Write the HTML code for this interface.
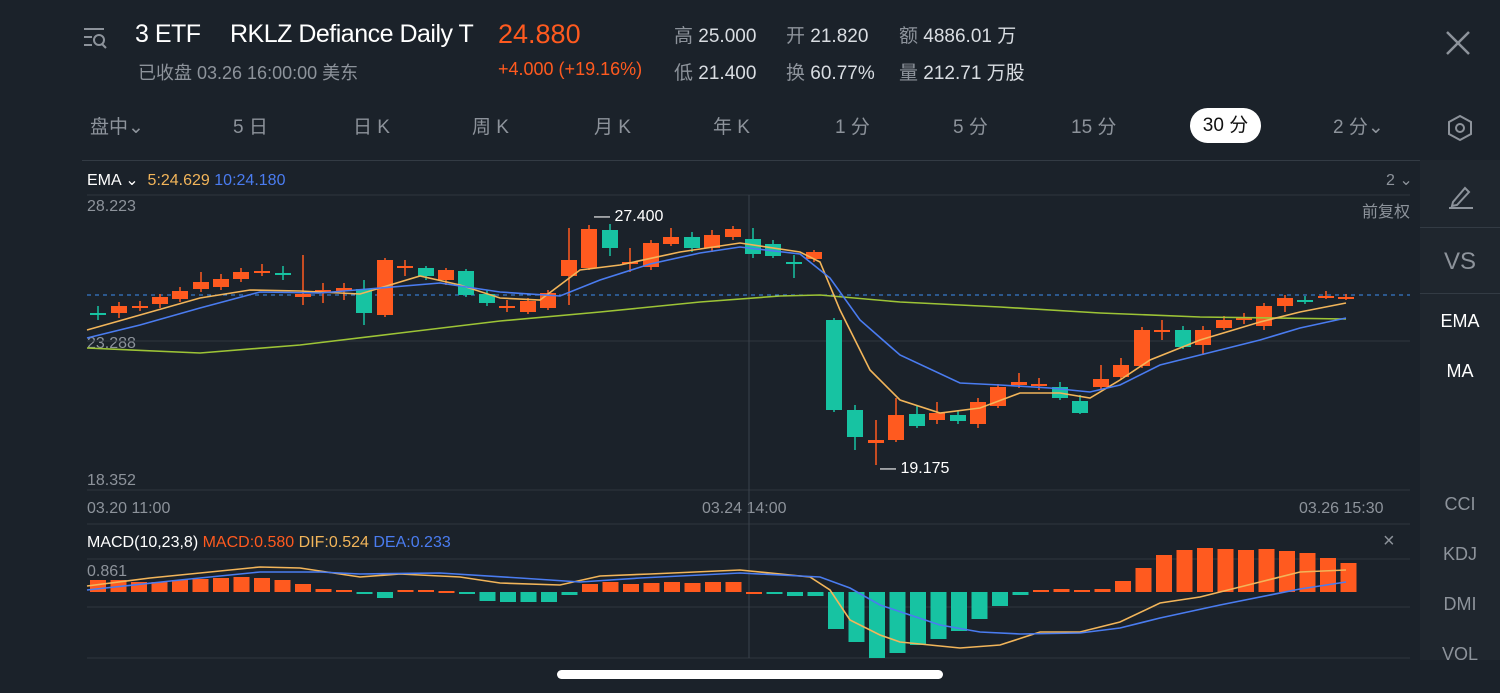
<!DOCTYPE html>
<html><head><meta charset="utf-8">
<style>
body{margin:0;width:1500px;height:693px;background:#1b222a;font-family:"Liberation Sans","Noto Sans CJK SC",sans-serif;overflow:hidden;position:relative;color:#d9dde2}
.a{position:absolute;white-space:nowrap}
.g{color:#8d939b}
.tab{position:absolute;top:112px;font-size:19px;color:#8d939b}
.side{position:absolute;left:1420px;width:80px;text-align:center;font-size:18px;color:#8d939b}
</style></head><body>
<svg class="a" style="left:82px;top:25px" width="28" height="26"><g stroke="#8d939b" stroke-width="2" fill="none"><line x1="2" y1="4" x2="22" y2="4"/><line x1="2" y1="12" x2="10" y2="12"/><line x1="2" y1="20" x2="10" y2="20"/><circle cx="17" cy="15" r="5"/><line x1="20" y1="19" x2="24" y2="23"/></g></svg>
<div class="a" style="left:135px;top:20px;font-size:25px;color:#fff;letter-spacing:-0.5px">3 ETF</div>
<div class="a" style="left:230px;top:20px;font-size:25px;color:#fff;letter-spacing:-0.5px">RKLZ Defiance Daily T</div>
<div class="a" style="left:498px;top:19px;font-size:27px;color:#ff5a1f">24.880</div>
<div class="a g" style="left:138px;top:59px;font-size:18px">已收盘 03.26 16:00:00 美东</div>
<div class="a" style="left:498px;top:59px;font-size:18px;color:#ff5a1f">+4.000 (+19.16%)</div>
<div class="a" style="left:674px;top:21px;font-size:19px"><span class="g">高</span> 25.000</div>
<div class="a" style="left:674px;top:58px;font-size:19px"><span class="g">低</span> 21.400</div>
<div class="a" style="left:786px;top:21px;font-size:19px"><span class="g">开</span> 21.820</div>
<div class="a" style="left:786px;top:58px;font-size:19px"><span class="g">换</span> 60.77%</div>
<div class="a" style="left:899px;top:21px;font-size:19px"><span class="g">额</span> 4886.01 万</div>
<div class="a" style="left:899px;top:58px;font-size:19px"><span class="g">量</span> 212.71 万股</div>
<svg class="a" style="left:1445px;top:30px" width="26" height="26"><g stroke="#8d939b" stroke-width="2.5"><line x1="2" y1="2" x2="24" y2="24"/><line x1="24" y1="2" x2="2" y2="24"/></g></svg>
<div class="tab" style="left:90px">盘中⌄</div>
<div class="tab" style="left:233px">5 日</div>
<div class="tab" style="left:353px">日 K</div>
<div class="tab" style="left:472px">周 K</div>
<div class="tab" style="left:594px">月 K</div>
<div class="tab" style="left:713px">年 K</div>
<div class="tab" style="left:835px">1 分</div>
<div class="tab" style="left:953px">5 分</div>
<div class="tab" style="left:1071px">15 分</div>
<div class="a" style="left:1190px;top:108px;width:71px;height:35px;border-radius:18px;background:#fff;color:#111;font-size:19px;text-align:center;line-height:35px">30 分</div>
<div class="tab" style="left:1333px">2 分⌄</div>
<svg class="a" style="left:1447px;top:114px" width="26" height="28"><polygon points="13,2 24,8 24,20 13,26 2,20 2,8" fill="none" stroke="#8d939b" stroke-width="2"/><circle cx="13" cy="14" r="4" fill="none" stroke="#8d939b" stroke-width="2"/></svg>
<div class="a" style="left:82px;top:160px;width:1338px;height:1px;background:#333b44"></div>
<div class="a" style="left:1420px;top:160px;width:80px;height:500px;background:#1f262e"></div>
<div class="a" style="left:1420px;top:227px;width:80px;height:1px;background:#333b44"></div>
<div class="a" style="left:1420px;top:293px;width:80px;height:1px;background:#333b44"></div>
<svg class="a" style="left:1447px;top:182px" width="28" height="28"><g stroke="#8d939b" stroke-width="2" fill="none"><path d="M6 20 L18 6 L22 10 L10 23 L5 24 Z"/><line x1="2" y1="26" x2="26" y2="26"/></g></svg>
<div class="side" style="top:248px;font-size:24px">VS</div>
<div class="side" style="top:311px;color:#fff">EMA</div>
<div class="side" style="top:361px;color:#fff">MA</div>
<div class="side" style="top:494px">CCI</div>
<div class="side" style="top:544px">KDJ</div>
<div class="side" style="top:594px">DMI</div>
<div class="side" style="top:644px">VOL</div>
<div class="a" style="left:87px;top:170px;font-size:16px;color:#fff">EMA ⌄ <span style="color:#f2b55a">&nbsp;5:24.629</span> <span style="color:#4a7cf0">10:24.180</span></div>
<div class="a g" style="left:1386px;top:170px;font-size:16px">2 ⌄</div>
<div class="a g" style="left:1362px;top:198px;font-size:16px">前复权</div>
<div class="a g" style="left:87px;top:198px;font-size:16px">28.223</div>
<div class="a g" style="left:87px;top:335px;font-size:16px">23.288</div>
<div class="a g" style="left:87px;top:472px;font-size:16px">18.352</div>
<div class="a g" style="left:87px;top:500px;font-size:16px">03.20 11:00</div>
<div class="a g" style="left:702px;top:500px;font-size:16px">03.24 14:00</div>
<div class="a g" style="left:1299px;top:500px;font-size:16px">03.26 15:30</div>
<div class="a" style="left:87px;top:534px;font-size:16px;color:#fff">MACD(10,23,8) <span style="color:#ff5a1f">MACD:0.580</span> <span style="color:#f2b55a">DIF:0.524</span> <span style="color:#4a7cf0">DEA:0.233</span></div>
<div class="a g" style="left:1383px;top:530px;font-size:20px">×</div>
<div class="a g" style="left:87px;top:563px;font-size:16px">0.861</div>
<div class="a" style="top:208px;font-size:16px;color:#fff;left:594px">— 27.400</div>
<div class="a" style="left:880px;top:460px;font-size:16px;color:#fff">— 19.175</div>
<svg id="c" class="a" style="left:0;top:0" width="1420" height="693"></svg>
<div class="a" style="left:557px;top:670px;width:386px;height:9px;border-radius:5px;background:#fff"></div>
<script>
var R="#ff5a1f",G="#17c3a2",s='';
[195,341,490,524,559,607,658].forEach(function(y){s+='<line x1="87" x2="1410" y1="'+y+'" y2="'+y+'" stroke="#2f363f"/>'});
s+='<line x1="749" x2="749" y1="195" y2="658" stroke="#3a424c"/>';
s+='<line x1="87" x2="1410" y1="295" y2="295" stroke="#3d8ef0" stroke-dasharray="4,4"/>';
var c=[[98,313,313,306,320,G],[119,306,313,302,318,R],[140,306,306,301,311,R],[160,297,304,294,308,R],[180,291,299,287,302,R],[201,282,289,272,292,R],[221,279,287,274,290,R],[241,272,279,268,282,R],[262,271,271,264,276,R],[283,273,273,266,280,G],[303,294,297,255,305,R],[323,290,293,283,303,R],[344,288,291,283,300,R],[364,289,313,280,325,G],[385,260,315,258,317,R],[405,266,266,260,276,R],[426,268,276,266,280,G],[446,270,280,268,285,R],[466,271,295,269,297,G],[487,294,303,290,306,G],[507,306,306,300,312,R],[528,301,312,298,314,R],[548,293,308,290,310,R],[569,260,276,228,305,R],[589,229,268,225,270,R],[610,230,248,224,256,G],[630,262,262,248,272,R],[651,243,267,240,270,R],[671,237,244,228,246,R],[692,237,248,232,252,G],[712,235,248,230,252,R],[733,229,237,226,240,R],[753,239,254,228,258,G],[773,244,256,240,258,G],[794,262,262,255,278,G],[814,252,259,250,262,R],[834,320,410,318,412,G],[855,410,437,405,450,G],[876,440,443,420,465,R],[896,415,440,398,442,R],[917,414,426,405,428,G],[937,413,420,402,424,R],[958,415,421,410,424,G],[978,402,424,398,428,R],[998,387,406,384,408,R],[1019,382,385,373,388,R],[1039,384,384,378,390,R],[1060,387,398,382,400,G],[1080,401,413,395,414,G],[1101,379,387,365,390,R],[1121,365,377,358,380,R],[1142,330,366,327,368,R],[1162,330,330,320,340,R],[1183,330,347,326,349,G],[1203,330,345,326,355,R],[1224,320,328,316,330,R],[1244,318,318,313,324,R],[1264,306,326,303,330,R],[1285,298,306,295,312,R],[1305,300,300,296,304,G],[1326,296,296,291,299,R],[1346,297,297,294,300,R]];
c.forEach(function(k){var t=Math.min(k[1],k[2]),h=Math.max(2,Math.abs(k[2]-k[1]));s+='<line x1="'+k[0]+'" x2="'+k[0]+'" y1="'+k[3]+'" y2="'+k[4]+'" stroke="'+k[5]+'" stroke-width="1.5"/><rect x="'+(k[0]-8)+'" y="'+t+'" width="16" height="'+h+'" fill="'+k[5]+'"/>'});
function pl(p,col){s+='<polyline fill="none" stroke="'+col+'" stroke-width="1.6" points="'+p+'"/>'}
pl("87,348 200,353 300,345 400,333 500,321 600,312 700,302 780,296 820,295 900,302 1000,307 1100,313 1200,317 1346,319","#9dc436");
pl("87,330 140,315 200,298 250,290 300,291 360,294 420,276 460,285 500,298 540,300 580,270 620,265 680,252 740,243 800,252 820,262 840,310 870,370 900,400 940,413 980,408 1020,393 1060,393 1090,398 1120,380 1150,360 1200,340 1260,322 1300,312 1346,303","#f2b55a");
pl("87,338 140,325 200,308 260,292 320,293 380,288 440,283 500,292 560,296 600,280 650,264 700,253 740,247 800,254 830,278 860,320 900,355 960,383 1000,385 1050,388 1090,392 1120,385 1160,365 1200,355 1260,340 1300,328 1346,318","#4a7cf0");
var m=[12,12,10,10,12,13,14,15,14,12,8,3,2,-1,-6,2,2,1,-2,-9,-10,-10,-10,-3,8,10,8,9,10,9,10,10,0,-1,-4,-4,-37,-50,-66,-61,-53,-47,-39,-27,-14,-3,2,3,2,3,11,24,37,42,44,43,42,43,41,39,34,29,21,22];
for(var i=0;i<62;i++){var x=98+i*20.5,v=m[i]||0,y=v>0?592-v:592,h=Math.max(2,Math.abs(v));s+='<rect x="'+(x-8)+'" y="'+y+'" width="16" height="'+h+'" fill="'+(v>=0?R:G)+'"/>';}
pl("87,586 150,578 210,572 260,567 300,568 360,577 400,574 460,577 500,583 560,585 600,576 650,574 740,570 810,577 830,590 850,620 880,635 900,642 960,648 1000,645 1040,632 1080,632 1120,622 1160,603 1200,597 1260,582 1300,572 1346,570","#f2b55a");
pl("87,590 180,580 260,572 320,572 360,574 440,573 520,578 580,582 640,578 740,573 800,576 820,577 850,588 880,605 940,625 980,632 1020,634 1080,633 1120,628 1160,618 1220,605 1300,589 1346,582","#4a7cf0");
document.getElementById('c').innerHTML=s;
</script>
</body></html>
